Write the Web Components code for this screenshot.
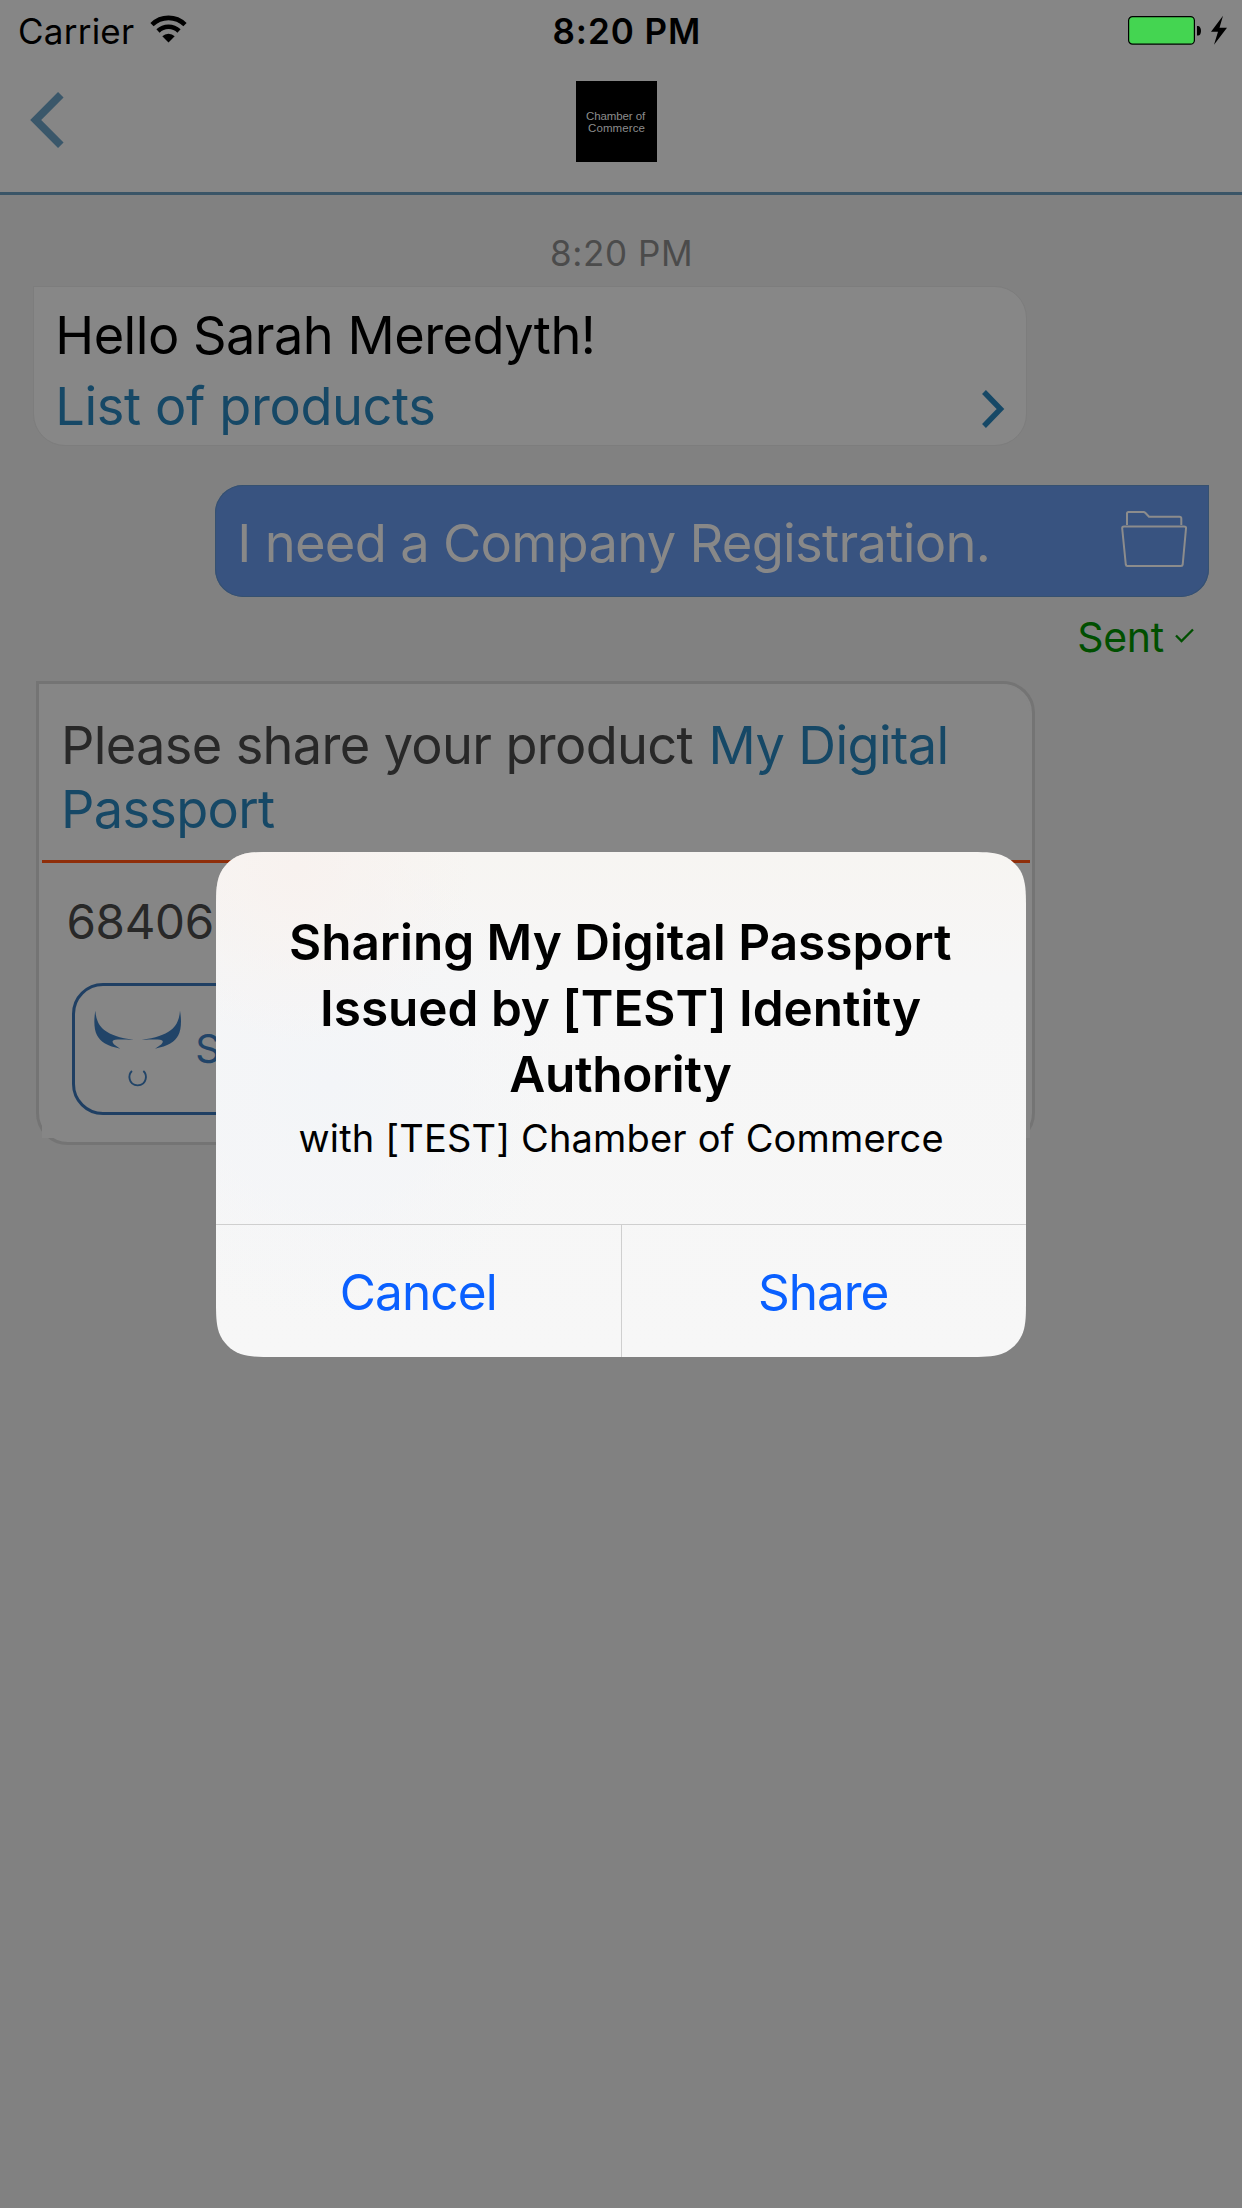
<!DOCTYPE html>
<html lang="en">
<head>
<meta charset="utf-8">
<title>Chamber of Commerce chat</title>
<style>
html,body{margin:0;padding:0}
body{width:1242px;height:2208px;overflow:hidden;background:#818181;font-family:Inter,"Liberation Sans",sans-serif}
</style>
</head>
<body>
<chat-screen></chat-screen>
<script>
const define = (name, html, setup) => customElements.define(name, class extends HTMLElement {
  connectedCallback() {
    if (this.shadowRoot) return;
    const t = document.createElement('template');
    t.innerHTML = html;
    this.attachShadow({mode: 'open'}).appendChild(t.content.cloneNode(true));
    if (setup) setup(this);
  }
});

/* One line of text tracked so that its ink spans exactly the "w" attribute. */
define('fit-text', `<style>:host{display:block;white-space:nowrap;flex:none}span{display:block}</style><span><slot></slot></span>`, el => {
  const w = parseFloat(el.getAttribute('w'));
  el.style.width = w + 'px';
  const cs = getComputedStyle(el), text = el.textContent;
  const ctx = document.createElement('canvas').getContext('2d');
  ctx.font = `${cs.fontWeight} ${cs.fontSize} ${cs.fontFamily}`;
  const m = ctx.measureText(text);
  const ink = m.actualBoundingBoxLeft + m.actualBoundingBoxRight;
  const span = el.shadowRoot.querySelector('span');
  if (text.length > 1) span.style.letterSpacing = ((w - ink) / (text.length - 1)).toFixed(3) + 'px';
  span.style.marginLeft = m.actualBoundingBoxLeft.toFixed(2) + 'px';
});

define('status-bar', `
<style>
:host{display:flex;height:60px;box-sizing:border-box;padding:13.3px 0 0 20px;font-size:35px;line-height:36px;color:#000}
svg{display:block;flex:none}
.wifi{margin:2px 0 0 16px}.time{margin-left:366.500px;font-weight:600}.bat{margin:1.7px 0 0 430px}
</style>
<fit-text w="114">Carrier</fit-text>
<svg class="wifi" width="37" height="28" viewBox="0 0 37 28"><path d="M2 9.6A23.5 23.5 0 0 1 35 9.6" fill="none" stroke="#000" stroke-width="4.6"/><path d="M8 16A15 15 0 0 1 29 16" fill="none" stroke="#000" stroke-width="4.6"/><path d="M12.3 21.2A8.8 8.8 0 0 1 24.7 21.2L18.5 27.6Z"/></svg>
<fit-text class="time" w="144.5">8:20 PM</fit-text>
<svg class="bat" width="100" height="32" viewBox="0 0 100 32"><rect x=".6" y="1.6" width="65.8" height="27.6" rx="4" fill="#44d551" stroke="#000" stroke-width="1.2"/><path d="M69 11h1a3 5 0 0 1 3 5a3 5 0 0 1-3 4.500h-1z"/><path d="M95 .8L83 16.800H90L86 29.800L99 12.700H91.500Z"/></svg>`);

define('brand-logo', `
<style>:host{display:flex;flex-direction:column;align-items:flex-start;width:81px;height:81px;background:#000;color:#8c8c8c;font:11.5px/12px "Liberation Sans",sans-serif;flex:none;box-sizing:border-box;padding:29px 0 0 10px}.b{margin-left:2px}</style>
<fit-text w="60">Chamber of</fit-text><fit-text class="b" w="56.500">Commerce</fit-text>`);

define('nav-bar', `
<style>:host{display:flex;height:132px;box-sizing:border-box;padding-left:30px}svg{margin-top:31px;flex:none}brand-logo{margin:21px 0 0 512px}</style>
<svg width="34" height="58" viewBox="0 0 34 58"><path d="M30.800 3.800L5.700 29L30.800 54.200" fill="none" stroke="#3a576a" stroke-width="7.800"/></svg>
<brand-logo></brand-logo>`);

define('app-header', `
<style>:host{display:block;background:#868686;border-bottom:3px solid #3a5567;height:192px}</style>
<status-bar></status-bar><nav-bar></nav-bar>`);

define('time-label', `
<style>:host{display:flex;height:91px;box-sizing:border-box;padding:37.600px 0 0 552px;font-size:35px;line-height:40px;color:#4b4b4b}</style>
<fit-text w="138">8:20 PM</fit-text>`);

define('greeting-bubble', `
<style>
:host{display:flex;flex-direction:column;gap:10.700px;box-sizing:border-box;width:994px;height:160px;margin-left:33px;padding:18.100px 21px 0 25.300px;background:#878787;border:1px solid #7d7d7d;border-radius:0 32px 32px 32px;font-size:52.300px;line-height:60px;color:#000}
div{display:flex;justify-content:space-between;color:#164866}svg{margin-top:13.500px}
</style>
<fit-text w="532.500">Hello Sarah Meredyth!</fit-text>
<div><fit-text w="374">List of products</fit-text><svg width="23" height="40" viewBox="0 0 23 40"><path d="M2 3L18.500 20L2 37" fill="none" stroke="#164866" stroke-width="5.400"/></svg></div>`);

define('sent-bubble', `
<style>
:host{display:flex;justify-content:space-between;box-sizing:border-box;width:994px;height:112px;margin:39px 0 0 215px;padding:27.800px 22px 0 26.300px;background:#385380;box-shadow:inset 0 0 0 1px #365170;border-radius:28px 0 28px 28px;font-size:52.500px;line-height:60px;color:#888}
svg{margin-top:-3px}
</style>
<fit-text w="746.400">I need a Company Registration.</fit-text>
<svg width="66" height="58" viewBox="0 0 66 58" fill="none" stroke="#8c8c8c" stroke-width="2" stroke-linejoin="round"><path d="M6 15V3.500Q6 2 7.500 2H22.500Q23.500 2 24.500 3L28 6.700H58.500Q60.300 6.700 60.300 8.500V15"/><path d="M3 16.500H63Q65.300 16.500 65 18.500L61.700 54.500Q61.500 56 60 56H6.300Q5 56 4.800 54.500L1.200 18.500Q1 16.500 3 16.500Z"/></svg>`);

define('sent-status', `
<style>:host{display:flex;height:84px;box-sizing:border-box;padding:15px 0 0 1079.300px;font-size:41px;line-height:50px;color:#004f00}svg{margin:14px 0 0 11px}</style>
<fit-text w="84.400">Sent</fit-text>
<svg width="20" height="20" viewBox="0 0 20 20"><path d="M1 9.500L6.500 15L18 3.500" fill="none" stroke="#004f00" stroke-width="2.300"/></svg>`);

define('sign-button', `
<style>
:host{display:flex;box-sizing:border-box;width:900px;height:132px;border:3px solid #1f3f63;border-radius:31px;padding-left:18.300px;color:#214468;font-size:40px;line-height:48px}
svg{margin-top:24px}fit-text{margin:39px 0 0 14px}
</style>
<svg width="90" height="76.670" viewBox="100 120 270 230"><g fill="#214468"><path d="M107 122C110 158 122 198 222 209C188 209 163 206 159 213C157 221 168 228 182 236C143 229 122 215 112 196C103 179 102 150 107 122Z"/><path d="M361 122C358 158 346 198 246 209C280 209 305 206 309 213C311 221 300 228 286 236C325 229 346 215 356 196C365 179 366 150 361 122Z"/></g><path d="M217 303C205 313 205 345 234 346C263 345 263 313 251 303" fill="none" stroke="#214468" stroke-width="5.500"/></svg>
<fit-text w="24">S</fit-text>`);

define('request-card', `
<style>
:host{display:block;box-sizing:border-box;width:999px;height:464px;margin-left:36px;border:3px solid #747474;border-radius:0 32px 32px 32px;background:#868686;color:#282828;font-size:52.300px;line-height:64px}
.in{margin:0 2px 0 3px;background:#868686;height:454px;border-top-right-radius:29px}
.q{height:176px;box-sizing:border-box;padding:29.100px 0 0 23px}
.row{display:flex;gap:19px}.link{color:#164866}
hr{margin:0;border:0;height:3px;background:#8f2e0a}
.code{height:120px;box-sizing:border-box;padding:33.900px 0 0 26.400px;font-size:47.500px;line-height:50px}
sign-button{margin-left:30px}
</style>
<div class="in"><div class="q"><div class="row"><fit-text w="628.500">Please share your product</fit-text><fit-text class="link" w="233">My Digital</fit-text></div>
<fit-text class="link" w="210">Passport</fit-text></div><hr>
<div class="code"><fit-text w="143.300">68406</fit-text></div><sign-button></sign-button></div>`);

define('alert-dialog', `
<style>
:host{position:absolute;left:216px;top:852px;display:flex;flex-direction:column;width:810px;height:505px;color:#000;
background:radial-gradient(circle at 10% 3%,#f8f2ef 0,#f8f2ef00 20%),radial-gradient(circle at 14% 46%,#f3f5f8 0,#f3f5f800 32%),linear-gradient(#f7f5f2 0,#f6f6f6 25%,#f7f7f7);
clip-path:path("M59.6 0H750.400C767.550 0 776.130 0 785.370 2.920C795.460 6.590 803.410 14.540 807.080 24.630C810 33.870 810 42.450 810 59.600V445.400C810 462.550 810 471.130 807.080 480.370C803.410 490.460 795.460 498.410 785.370 502.080C776.130 505 767.550 505 750.400 505H59.600C42.450 505 33.870 505 24.630 502.080C14.540 498.410 6.590 490.460 2.920 480.370C0 471.130 0 462.550 0 445.400V59.600C0 42.450 0 33.870 2.920 24.630C6.590 14.540 14.540 6.590 24.630 2.920C33.870 0 42.450 0 59.600 0Z")}
.msg{display:flex;flex-direction:column;flex:none;align-items:center;height:373px;box-sizing:border-box;padding-top:57px;border-bottom:1px solid #cfcfcf}
.title{font-weight:600;font-size:49.500px;line-height:66px}
.two{margin-left:2px}
.sub{font-size:38px;line-height:46px;margin-top:8px}
.act{display:flex;flex:none;height:132px;color:#0a60ff;font-size:49.500px;line-height:134px}
.act div{flex:1;display:flex;justify-content:center}.act div+div{border-left:1px solid #cfcfcf}
</style>
<div class="msg"><fit-text class="title" w="660">Sharing My Digital Passport</fit-text><fit-text class="title two" w="597.800">Issued by [TEST] Identity</fit-text><fit-text class="title" w="221.500">Authority</fit-text><fit-text class="sub" w="643">with [TEST] Chamber of Commerce</fit-text></div>
<div class="act"><div><fit-text w="152.900">Cancel</fit-text></div><div><fit-text w="127.600">Share</fit-text></div></div>`);

define('chat-screen', `
<style>:host{display:block;position:relative;width:1242px;height:2208px;background:#818181;overflow:hidden}</style>
<app-header></app-header>
<time-label></time-label>
<greeting-bubble></greeting-bubble>
<sent-bubble></sent-bubble>
<sent-status></sent-status>
<request-card></request-card>
<alert-dialog></alert-dialog>`);
</script>
</body>
</html>
